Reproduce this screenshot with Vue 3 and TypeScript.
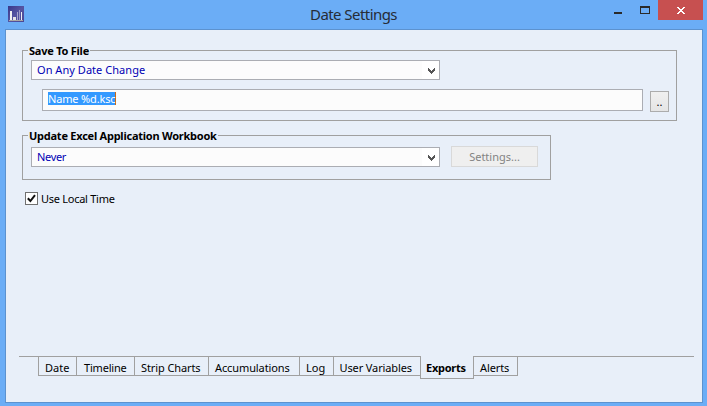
<script setup lang="ts">
import { ref } from 'vue'

interface Tab {
  name: string
  key: string
}

const tabs: Tab[] = [
  { name: 'Date', key: 'date' },
  { name: 'Timeline', key: 'timeline' },
  { name: 'Strip Charts', key: 'strip' },
  { name: 'Accumulations', key: 'accum' },
  { name: 'Log', key: 'log' },
  { name: 'User Variables', key: 'vars' },
  { name: 'Exports', key: 'exports' },
  { name: 'Alerts', key: 'alerts' },
]
const active = ref('exports')
const localTime = ref(true)
</script>

<template>
  <div class="window">
    <header class="titlebar">
      <svg class="logo" width="16" height="16" viewBox="0 0 16 16" shape-rendering="crispEdges">
        <defs>
          <linearGradient id="logo-bg" x1="0" y1="0" x2="1" y2="1">
            <stop offset="0" stop-color="#37378a" />
            <stop offset="0.5" stop-color="#5554a2" />
            <stop offset="1" stop-color="#4a4794" />
          </linearGradient>
        </defs>
        <rect width="16" height="16" fill="url(#logo-bg)" />
        <rect x="1" y="14" width="14" height="1" fill="#aaa6a4" />
        <rect x="2" y="5" width="2" height="9" fill="#f0f0f2" />
        <rect x="5" y="11" width="3" height="3" fill="#e4e3e6" />
        <rect x="9" y="6" width="1" height="8" fill="#a7a6cc" />
        <rect x="11" y="4" width="1" height="10" fill="#9b99c6" />
        <rect x="13" y="6" width="1" height="8" fill="#f0f0f4" />
      </svg>
      <h1 class="title">Date Settings</h1>
      <svg class="controls" width="97" height="20" viewBox="0 0 97 20" shape-rendering="crispEdges">
        <rect x="8" y="12" width="8" height="2" fill="#2a2a2a" />
        <path d="M34 6h10v8h-10z M35 8v5h8v-5z" fill="#2a2a2a" fill-rule="evenodd" />
        <rect x="52" y="0" width="45" height="20" fill="#c75050" />
        <path
          d="M71 7h2v1h1v1h2v-1h1v-1h2v1h-1v1h-1v1h-1v1h1v1h1v1h1v1h-2v-1h-1v-1h-2v1h-1v1h-2v-1h1v-1h1v-1h1v-1h-1v-1h-1v-1h-1z"
          fill="#fff"
        />
      </svg>
    </header>

    <main class="panel">
      <section class="group save">
        <span class="legend">Save To File</span>
        <div class="select">
          <span class="t-change">On Any Date Change</span>
          <svg class="chevron" width="7" height="6" viewBox="0 0 7 6" shape-rendering="crispEdges">
            <path d="M0 0h1v1h1v1h1v1h1v-1h1v-1h1v-1h1v3h-1v1h-1v1h-1v1h-1v-1h-1v-1h-1v-1h-1z" fill="#555" />
          </svg>
        </div>
        <div class="file-row">
          <div class="field"><span class="selected">Name %d.ksc</span></div>
          <button class="browse" type="button">..</button>
        </div>
      </section>

      <section class="group excel">
        <span class="legend">Update Excel Application Workbook</span>
        <div class="select">
          <span class="t-never">Never</span>
          <svg class="chevron" width="7" height="6" viewBox="0 0 7 6" shape-rendering="crispEdges">
            <path d="M0 0h1v1h1v1h1v1h1v-1h1v-1h1v-1h1v3h-1v1h-1v1h-1v1h-1v-1h-1v-1h-1v-1h-1z" fill="#555" />
          </svg>
        </div>
        <button class="settings" type="button" disabled>Settings...</button>
      </section>

      <div class="check" @click="localTime = !localTime">
        <span class="box">
          <svg v-if="localTime" width="11" height="11" viewBox="0 0 11 11">
            <path d="M1.8 5.2 L4.4 8 L9 2.2" fill="none" stroke="#111" stroke-width="2" />
          </svg>
        </span>
        <span class="t-local">Use Local Time</span>
      </div>

      <nav class="tabs">
        <div
          v-for="tab in tabs"
          :key="tab.key"
          class="tab"
          :class="[tab.key, { active: tab.key === active }]"
          @click="active = tab.key"
        >
          <span>{{ tab.name }}</span>
        </div>
        <div class="rest"></div>
      </nav>
    </main>
  </div>
</template>

<style>
body {
  margin: 0;
  overflow: hidden;
}
</style>

<style scoped>
.window {
  box-sizing: border-box;
  width: 707px;
  height: 406px;
  background: #6badf6;
  padding: 0 4px 3px 5px;
  font-family: "Noto Sans", "Open Sans", sans-serif;
  font-size: 11px;
  line-height: 15px;
  color: #000;
  white-space: nowrap;
}
.window * {
  box-sizing: border-box;
}
.titlebar {
  display: flex;
  height: 29px;
}
.logo {
  margin: 6px 0 0 3px;
}
.title {
  margin: 3px 0 0 286px;
  width: 90px;
  font-size: 15px;
  line-height: 22px;
  font-weight: 400;
  letter-spacing: -0.56px;
  color: #262c36;
}
.controls {
  margin-left: auto;
}
.panel {
  display: flex;
  flex-direction: column;
  height: 374px;
  border: 1px solid #5c92cf;
  background: #e8eff9;
  padding: 20px 8px 0 16px;
}
.group {
  display: flex;
  border: 1px solid #a0a0a0;
  position: relative;
}
.save {
  flex-direction: column;
  width: 655px;
  height: 71px;
  padding: 9px 7px 0 8px;
}
.excel {
  width: 529px;
  height: 45px;
  margin-top: 14px;
  padding: 10px 0 0 8px;
}
.legend {
  position: absolute;
  left: 5px;
  top: -8px;
  padding: 0 1px;
  background: #e8eff9;
  font-weight: 700;
  letter-spacing: -0.24px;
}
.t-change {
  letter-spacing: 0.04px;
}
.t-never {
  letter-spacing: -0.35px;
}
.t-local {
  letter-spacing: -0.27px;
}
.select {
  display: flex;
  align-items: flex-start;
  justify-content: space-between;
  width: 409px;
  height: 20px;
  flex: none;
  padding: 1px 4px 0 5px;
  border: 1px solid #abadb3;
  background: linear-gradient(90deg, #fcfcfc 390px, #fff 390px);
  color: #0000b4;
}
.chevron {
  margin-top: 6px;
}
.excel .select {
  margin-top: 1px;
}
.file-row {
  display: flex;
  margin: 9px 0 0 11px;
}
.field {
  width: 601px;
  height: 22px;
  padding: 2px 5px;
  border: 1px solid #abadb3;
  background: #fcfcfc;
}
.selected {
  display: block;
  width: 68px;
  height: 13px;
  line-height: 14px;
  background: #3399ff;
  border-right: 1px solid #c86a18;
  color: #fff;
  letter-spacing: -0.16px;
}
button {
  padding: 0;
  font: inherit;
  text-align: center;
}
.browse {
  width: 19px;
  height: 21px;
  margin: 2px 0 0 7px;
  border: 1px solid #acacac;
  background: linear-gradient(#f0f0f0, #e5e5e5);
}
.settings {
  width: 87px;
  height: 21px;
  margin-left: 11px;
  border: 1px solid #d9d9d9;
  background: #efefef;
  color: #838383;
}
.check {
  display: flex;
  align-items: center;
  gap: 3px;
  height: 15px;
  margin: 11px 0 0 3px;
}
.box {
  display: flex;
  width: 13px;
  height: 13px;
  border: 1px solid #707070;
  background: #fff;
}
.tabs {
  display: flex;
  align-items: flex-start;
  margin: 150px 0 0 -3px;
  padding-left: 19px;
  width: 675px;
  background: linear-gradient(#a0a0a0, #a0a0a0) 0 0 / 19px 1px no-repeat;
}
.tab {
  height: 20px;
  padding: 3px 0 0 6px;
  border: 1px solid #a0a0a0;
  border-right: 0;
  letter-spacing: -0.1px;
}
.date { width: 38px; letter-spacing: 0; }
.timeline { width: 58px; padding-left: 7px; letter-spacing: -0.2px; }
.strip { width: 74px; }
.accum { width: 91px; }
.log { width: 34px; letter-spacing: 0; }
.vars { width: 87px; padding-left: 5.5px; letter-spacing: -0.12px; }
.exports { width: 54px; }
.alerts { width: 44px; }
.tab.active {
  height: 23px;
  padding: 4px 0 0 5px;
  border-top: 0;
  border-right: 1px solid #a0a0a0;
  font-weight: 700;
  letter-spacing: -0.25px;
}
.tab.alerts {
  border-left: 0;
  border-right: 1px solid #a0a0a0;
}
.rest {
  flex: 1;
  height: 1px;
  background: #a0a0a0;
}
</style>
